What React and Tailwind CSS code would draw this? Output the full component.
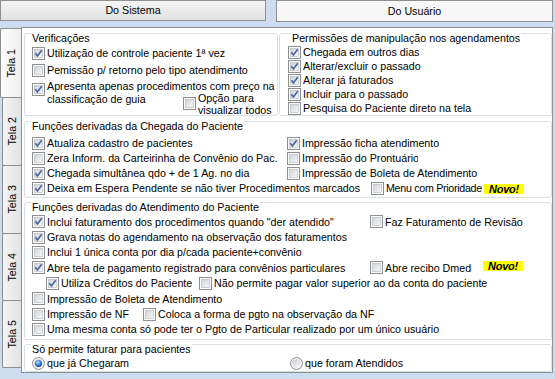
import clsx from "clsx";

function Box({ on }) {
  return (
    <svg width="13" height="13" viewBox="0 0 13 13" className="shrink-0">
      <defs>
        <linearGradient id="cbf" x1="0" y1="0" x2="1" y2="1">
          <stop offset="0" stopColor="#cfd3d8" />
          <stop offset="1" stopColor="#f8f8f8" />
        </linearGradient>
      </defs>
      <rect x="0.5" y="0.5" width="12" height="12" fill="#fdfdfd" stroke="#8e8f8f" />
      <rect x="2.5" y="2.5" width="8" height="8" fill="url(#cbf)" stroke="#b3b7bd" strokeWidth="0.6" />
      {on && (
        <path d="M3.3 6.2 5.4 8.9 9.7 3.3" fill="none" stroke="#4765a8" strokeWidth="1.7" />
      )}
    </svg>
  );
}

function Radio({ on }) {
  return (
    <svg width="13" height="13" viewBox="0 0 13 13" className="shrink-0">
      <defs>
        <linearGradient id="rbf" x1="0" y1="0" x2="1" y2="1">
          <stop offset="0" stopColor="#c9cdd3" />
          <stop offset="1" stopColor="#fafafa" />
        </linearGradient>
        <radialGradient id="rbd" cx="0.4" cy="0.35" r="0.7">
          <stop offset="0" stopColor="#bfe0fb" />
          <stop offset="0.5" stopColor="#3a8ce0" />
          <stop offset="1" stopColor="#0f3f8f" />
        </radialGradient>
      </defs>
      <circle cx="6.5" cy="6.5" r="6" fill="#f4f4f4" stroke="#8e8f8f" />
      <circle cx="6.5" cy="6.5" r="4.5" fill="url(#rbf)" />
      {on && <circle cx="6.5" cy="6.5" r="3.6" fill="url(#rbd)" />}
    </svg>
  );
}

function Opt({ on, radio, children, className, textClass }) {
  return (
    <div className={clsx("flex items-center gap-[2px] whitespace-nowrap shrink-0", className)}>
      {radio ? <Radio on={on} /> : <Box on={on} />}
      <span className={textClass}>{children}</span>
    </div>
  );
}

function Novo({ className }) {
  return (
    <span
      className={clsx(
        "inline-flex items-center justify-center bg-[#ffff00] w-[40px] h-[10px] text-[11px] leading-[10px] font-bold italic text-black tracking-[-0.2px]",
        className
      )}
    >
      Novo!
    </span>
  );
}

function Group({ title, className, titleClass, children }) {
  return (
    <div className={clsx("border border-[#d5dfe5] rounded-[3px] pl-[7px] shrink-0", className)}>
      <div className={clsx("-mt-[2px] -ml-[1px] w-fit bg-white px-[1px] h-[13px] leading-[13px] whitespace-nowrap", titleClass)}>
        {title}
      </div>
      {children}
    </div>
  );
}

function Tabs() {
  const tabs = [
    ["Tela 1", "h-[70px]"],
    ["Tela 2", "h-[69px]"],
    ["Tela 3", "h-[69px]"],
    ["Tela 4", "h-[68px]"],
    ["Tela 5", "h-[68px]"],
  ];
  return (
    <div className="w-[21px] shrink-0 flex flex-col pt-[1px]">
      {tabs.map(([label, h], i) => (
        <div
          key={label}
          className={clsx(
            "flex items-center justify-center border border-r-0 border-[#8e8f8f] rounded-l-[2px] bg-linear-to-r",
            h,
            i === 0 ? "from-[#fbfbfb] to-[#efefef]" : "ml-[2px] -mt-[1px] from-[#f4f4f4] to-[#e2e2e2]"
          )}
        >
          <span className="[writing-mode:vertical-rl] rotate-180 leading-[13px]">{label}</span>
        </div>
      ))}
    </div>
  );
}

export default function App() {
  return (
    <div className="w-[555px] h-[379px] overflow-hidden bg-[#cddcef] font-['Liberation_Sans',Arial,sans-serif] text-[10.7px] text-black flex flex-col">
      <div className="flex h-[23px] shrink-0">
        <div className="w-[266px] h-[21px] border border-[#8e8f8f] bg-linear-to-b from-[#f5f5f5] to-[#e1e1e1] flex items-center justify-center">
          Do Sistema
        </div>
        <div className="ml-[10px] mr-[2px] flex-1 h-[22px] border border-[#8e8f8f] bg-[#f7f7f7] flex items-center justify-center">
          Do Usuário
        </div>
      </div>

      <div className="flex flex-1 mt-[4px] mb-[6px] mr-[2px]">
        <Tabs />
        <div className="flex-1 bg-white border border-[#8e8f8f] pl-[2px] pt-[5px] flex flex-col">
          {/* Verificações + Permissões */}
          <div className="flex gap-[1px] shrink-0">
            <Group title="Verificações" className="w-[254px] h-[83px]">
              <div className="flex items-center h-[16px]">
                <Opt on>Utilização de controle paciente 1ª vez</Opt>
              </div>
              <div className="flex items-center h-[16px] mt-[1px]">
                <Opt>Pemissão p/ retorno pelo tipo atendimento</Opt>
              </div>
              <div className="flex items-start gap-[2px] mt-[2px]">
                <div className="mt-[3px]">
                  <Box on />
                </div>
                <div className="leading-[13px] whitespace-nowrap">
                  Apresenta apenas procedimentos com preço na
                  <br />
                  classificação de guia
                </div>
              </div>
              <div className="flex items-start gap-[2px] -mt-[14px] ml-[151px] w-fit">
                <div className="mt-[5px]">
                  <Box />
                </div>
                <div className="leading-[12px] whitespace-nowrap">
                  Opção para
                  <br />
                  visualizar todos
                </div>
              </div>
            </Group>
            <Group
              title="Permissões de manipulação nos agendamentos"
              className="flex-1 h-[83px] pl-[8px]"
              titleClass="ml-[3px]"
            >
              <div className="flex items-center h-[14px]">
                <Opt on>Chegada em outros dias</Opt>
              </div>
              <div className="flex items-center h-[14px]">
                <Opt on>Alterar/excluir o passado</Opt>
              </div>
              <div className="flex items-center h-[14px]">
                <Opt on>Alterar já faturados</Opt>
              </div>
              <div className="flex items-center h-[14px]">
                <Opt on>Incluir para o passado</Opt>
              </div>
              <div className="flex items-center h-[14px]">
                <Opt>Pesquisa do Paciente direto na tela</Opt>
              </div>
            </Group>
          </div>

          {/* Chegada */}
          <Group title="Funções derivadas da Chegada do Paciente" className="mt-[5px] h-[77px]">
            <div className="mt-[3px]">
              <div className="flex items-center h-[15px]">
                <Opt on className="w-[255px]">Atualiza cadastro de pacientes</Opt>
                <Opt on>Impressão ficha atendimento</Opt>
              </div>
              <div className="flex items-center h-[15px]">
                <Opt className="w-[255px]">Zera Inform. da Carteirinha de Convênio do Pac.</Opt>
                <div className="flex items-center gap-[2px] shrink-0">
                  <Box />
                  <span className="w-[116px] overflow-hidden whitespace-nowrap">Impressão do Prontuário</span>
                </div>
              </div>
              <div className="flex items-center h-[15px]">
                <Opt on className="w-[255px]">Chegada simultânea qdo + de 1 Ag. no dia</Opt>
                <Opt>Impressão de Boleta de Atendimento</Opt>
              </div>
              <div className="flex items-center h-[15px]">
                <Opt on className="w-[339px]">Deixa em Espera Pendente se não tiver Procedimentos marcados</Opt>
                <Opt className="w-[113px]" textClass="tracking-[-0.3px]">Menu com Prioridade</Opt>
                <Novo />
              </div>
            </div>
          </Group>

          {/* Atendimento */}
          <Group title="Funções derivadas do Atendimento do Paciente" className="mt-[4px] h-[138px]">
            <div className="flex items-center h-[15.4px]">
              <Opt on className="w-[338px]">Inclui faturamento dos procedimentos quando &quot;der atendido&quot;</Opt>
              <Opt>Faz Faturamento de Revisão</Opt>
            </div>
            <div className="flex items-center h-[15.4px]">
              <Opt on>Grava notas do agendamento na observação dos faturamentos</Opt>
            </div>
            <div className="flex items-center h-[15.4px]">
              <Opt>Inclui 1 única conta por dia p/cada paciente+convênio</Opt>
            </div>
            <div className="flex items-center h-[15.4px]">
              <Opt on className="w-[338px]">Abre tela de pagamento registrado para convênios particulares</Opt>
              <Opt className="w-[113px]">Abre recibo Dmed</Opt>
              <Novo className="-translate-y-[2px]" />
            </div>
            <div className="flex items-center h-[15.4px] ml-[14px]">
              <Opt on className="w-[153px]">Utiliza Créditos do Paciente</Opt>
              <Opt>Não permite pagar valor superior ao da conta do paciente</Opt>
            </div>
            <div className="flex items-center h-[15.4px]">
              <Opt>Impressão de Boleta de Atendimento</Opt>
            </div>
            <div className="flex items-center h-[15.4px]">
              <Opt className="w-[111px]">Impressão de NF</Opt>
              <Opt>Coloca a forma de pgto na observação da NF</Opt>
            </div>
            <div className="flex items-center h-[15.4px]">
              <Opt>Uma mesma conta só pode ter o Pgto de Particular realizado por um único usuário</Opt>
            </div>
          </Group>

          {/* Só permite faturar */}
          <Group title="Só permite faturar para pacientes" className="mt-[4px] h-[28px]">
            <div className="flex items-center h-[14px]">
              <Opt radio on className="w-[258px]">que já Chegaram</Opt>
              <Opt radio>que foram Atendidos</Opt>
            </div>
          </Group>
        </div>
      </div>
    </div>
  );
}
